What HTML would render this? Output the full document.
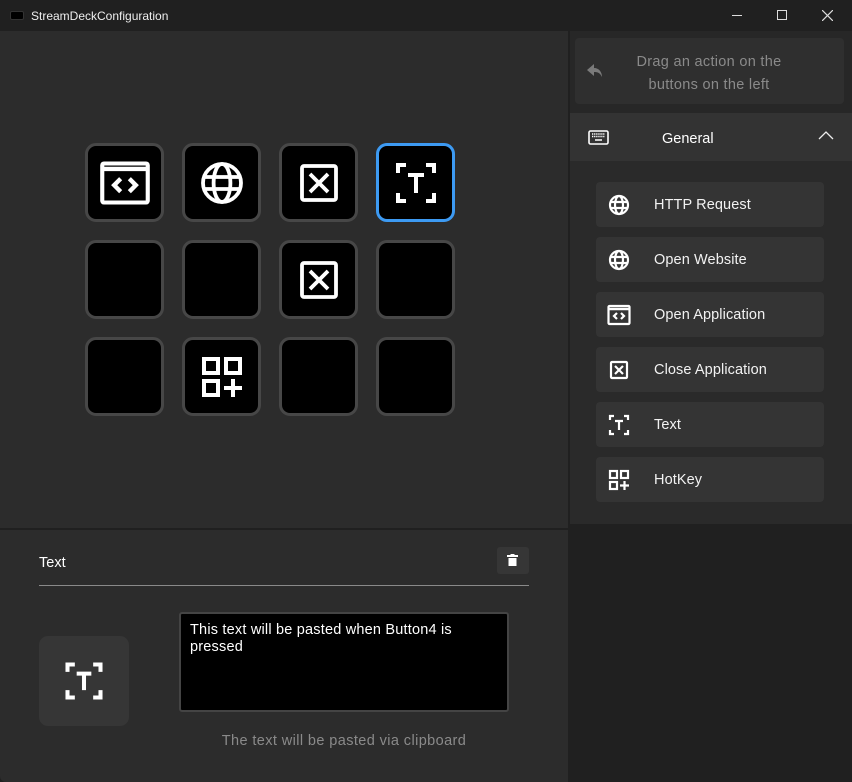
<!DOCTYPE html><html><head><style>
*{margin:0;padding:0;box-sizing:border-box}
body{width:852px;height:782px;background:#202020;font-family:"Liberation Sans",sans-serif;position:relative;overflow:hidden;color:#fff}
.a{position:absolute}
.btn{position:absolute;width:79px;height:79px;border:3px solid #474747;border-radius:11px;background:#000;display:flex;align-items:center;justify-content:center}
.btn.sel{border-color:#3d9af2}
.item{position:absolute;left:596px;width:228px;height:45px;background:#343434;border-radius:4px;font-size:14.5px;color:#f2f2f2;letter-spacing:0.1px}
.item svg{position:absolute;left:11px;top:11px}
.item span{position:absolute;left:58px;top:15px}
svg{display:block}
</style></head><body>
<div class="a" style="left:0;top:0;width:852px;height:31px;background:#202020"></div>
<div class="a" style="left:10px;top:11px;width:14px;height:9px;background:#000;border-radius:2px;border:1px solid #333"></div>
<div class="a" style="left:31px;top:9px;font-size:12px;color:#eee">StreamDeckConfiguration</div>
<div class="a" style="left:732px;top:15px;width:10px;height:1px;background:#ddd"></div>
<div class="a" style="left:777px;top:10px;width:10px;height:10px;border:1px solid #ddd"></div>
<svg class="a" style="left:822px;top:10px" width="11" height="11"><path d="M0 0L11 11M11 0L0 11" stroke="#ddd" stroke-width="1.2"/></svg>

<div class="a" style="left:0;top:31px;width:568px;height:497px;background:#2c2c2c"></div>
<div class="a" style="left:0;top:530px;width:568px;height:252px;background:#2c2c2c;border-bottom-left-radius:6px"></div>
<div class="a" style="left:570px;top:31px;width:282px;height:493px;background:#2a2a2a"></div>
<div class="a" style="left:570px;top:31px;width:282px;height:82px;background:#272727"></div>
<div class="a" style="left:575px;top:38px;width:269px;height:66px;background:#2f2f2f;border-radius:4px"></div>
<svg class="a" style="left:587px;top:64px" width="16" height="14" viewBox="0 0 16 14"><path d="M7 0L0 6L7 12V8C11 8 13 9 15 13C15 8 12 4 7 4Z" fill="#7a7a7a"/></svg>
<div class="a" style="left:600px;top:51px;width:218px;text-align:center;font-size:14.5px;line-height:23px;color:#8a8a8a;letter-spacing:0.3px">Drag an action on the<br>buttons on the left</div>
<div class="a" style="left:570px;top:113px;width:282px;height:48px;background:#333"></div>
<svg class="a" style="left:588px;top:130px" width="21" height="15" viewBox="0 0 21 15"><rect x="1" y="1" width="19" height="13" rx="1.5" fill="none" stroke="#fff" stroke-width="1.6"/><path d="M4 4h13M4 6.5h13" stroke="#fff" stroke-width="1.4" stroke-dasharray="1.3 0.8"/><path d="M7 10h7" stroke="#fff" stroke-width="1.5"/></svg>
<div class="a" style="left:662px;top:131px;font-size:14.5px">General</div>
<svg class="a" style="left:818px;top:131px" width="16" height="9"><path d="M1 8L8 1L15 8" fill="none" stroke="#eee" stroke-width="1.3"/></svg>

<div class="item" style="top:182px"><svg width="24" height="24" viewBox="0 0 24 24" fill="none" stroke="#fff" stroke-width="2.2"><circle cx="12" cy="12" r="9"/><ellipse cx="12" cy="12" rx="4" ry="9"/><path d="M3 9h18M3 15h18"/></svg><span>HTTP Request</span></div>
<div class="item" style="top:237px"><svg width="24" height="24" viewBox="0 0 24 24" fill="none" stroke="#fff" stroke-width="2.2"><circle cx="12" cy="12" r="9"/><ellipse cx="12" cy="12" rx="4" ry="9"/><path d="M3 9h18M3 15h18"/></svg><span>Open Website</span></div>
<div class="item" style="top:292px"><svg width="24" height="24" viewBox="0 0 24 24" fill="none" stroke="#fff" stroke-width="2.2"><rect x="1.5" y="3" width="21" height="18" rx="1"/><path d="M2 6h20" stroke-width="2.5"/><path d="M10 10l-3 3l3 3M14 10l3 3l-3 3"/></svg><span>Open Application</span></div>
<div class="item" style="top:347px"><svg width="24" height="24" viewBox="0 0 24 24" fill="none" stroke="#fff" stroke-width="2.2"><rect x="4" y="4" width="16" height="16" rx="1"/><path d="M8 8l8 8M16 8l-8 8"/></svg><span>Close Application</span></div>
<div class="item" style="top:402px"><svg width="24" height="24" viewBox="0 0 24 24" fill="none" stroke="#fff" stroke-width="2.2"><path d="M3 7V3h4M17 3h4v4M21 17v4h-4M7 21H3v-4M8 8h8M12 8v9"/></svg><span>Text</span></div>
<div class="item" style="top:457px"><svg width="24" height="24" viewBox="0 0 24 24" fill="none" stroke="#fff" stroke-width="2.2"><rect x="3" y="3" width="7" height="7"/><rect x="14" y="3" width="7" height="7"/><rect x="3" y="14" width="7" height="7"/><path d="M17.5 13v9M13 17.5h9"/></svg><span>HotKey</span></div>

<div class="btn" style="left:85px;top:143px"><svg width="52" height="52" viewBox="0 0 24 24" fill="none" stroke="#fff" stroke-width="1.9"><rect x="1.5" y="3" width="21" height="18" rx="0.8"/><path d="M2 5.5h20" stroke-width="2"/><path d="M10 10l-3 3l3 3M14 10l3 3l-3 3" stroke-width="2"/></svg></div>
<div class="btn" style="left:182px;top:143px"><svg width="48" height="48" viewBox="0 0 24 24" fill="none" stroke="#fff" stroke-width="1.9"><circle cx="12" cy="12" r="9.5"/><ellipse cx="12" cy="12" rx="4.2" ry="9.5"/><path d="M2.5 9h19M2.5 15h19"/></svg></div>
<div class="btn" style="left:279px;top:143px"><svg width="48" height="48" viewBox="0 0 24 24" fill="none" stroke="#fff" stroke-width="1.9"><rect x="3.5" y="3.5" width="17" height="17" rx="1"/><path d="M7.5 7.5l9 9M16.5 7.5l-9 9"/></svg></div>
<div class="btn sel" style="left:376px;top:143px"><svg width="48" height="48" viewBox="0 0 24 24" fill="none" stroke="#fff" stroke-width="2"><path d="M3 7V3h4M17 3h4v4M21 17v4h-4M7 21H3v-4M8 8h8M12 8v9"/></svg></div>
<div class="btn" style="left:85px;top:240px"></div>
<div class="btn" style="left:182px;top:240px"></div>
<div class="btn" style="left:279px;top:240px"><svg width="48" height="48" viewBox="0 0 24 24" fill="none" stroke="#fff" stroke-width="1.9"><rect x="3.5" y="3.5" width="17" height="17" rx="1"/><path d="M7.5 7.5l9 9M16.5 7.5l-9 9"/></svg></div>
<div class="btn" style="left:376px;top:240px"></div>
<div class="btn" style="left:85px;top:337px"></div>
<div class="btn" style="left:182px;top:337px"><svg width="48" height="48" viewBox="0 0 24 24" fill="none" stroke="#fff" stroke-width="2"><rect x="3" y="3" width="7" height="7"/><rect x="14" y="3" width="7" height="7"/><rect x="3" y="14" width="7" height="7"/><path d="M17.5 13v9M13 17.5h9"/></svg></div>
<div class="btn" style="left:279px;top:337px"></div>
<div class="btn" style="left:376px;top:337px"></div>

<div class="a" style="left:39px;top:555px;font-size:14.5px">Text</div>
<div class="a" style="left:497px;top:547px;width:32px;height:27px;background:#363636;border-radius:3px"></div>
<svg class="a" style="left:507px;top:554px" width="11" height="13"><rect x="0" y="1" width="11" height="2" fill="#fff"/><rect x="3.5" y="0" width="4" height="2" fill="#fff"/><path d="M1.5 4h8v8h-8z" fill="#fff"/></svg>
<div class="a" style="left:39px;top:585px;width:490px;height:1px;background:#8a8a8a"></div>
<div class="a" style="left:39px;top:636px;width:90px;height:90px;background:#363636;border-radius:9px"></div>
<svg class="a" style="left:62px;top:659px" width="44" height="44" viewBox="0 0 24 24" fill="none" stroke="#fff" stroke-width="2.2"><path d="M3 7V3h4M17 3h4v4M21 17v4h-4M7 21H3v-4M8 8h8M12 8v9"/></svg>
<div class="a" style="left:179px;top:612px;width:330px;height:100px;background:#000;border:2px solid #444;border-radius:3px;padding:8px 9px;font-size:14.5px;line-height:17px;letter-spacing:0.2px">This text will be pasted when Button4 is<br>pressed</div>
<div class="a" style="left:179px;top:733px;width:330px;text-align:center;font-size:14.5px;color:#8a8a8a;letter-spacing:0.4px">The text will be pasted via clipboard</div>
</body></html>
